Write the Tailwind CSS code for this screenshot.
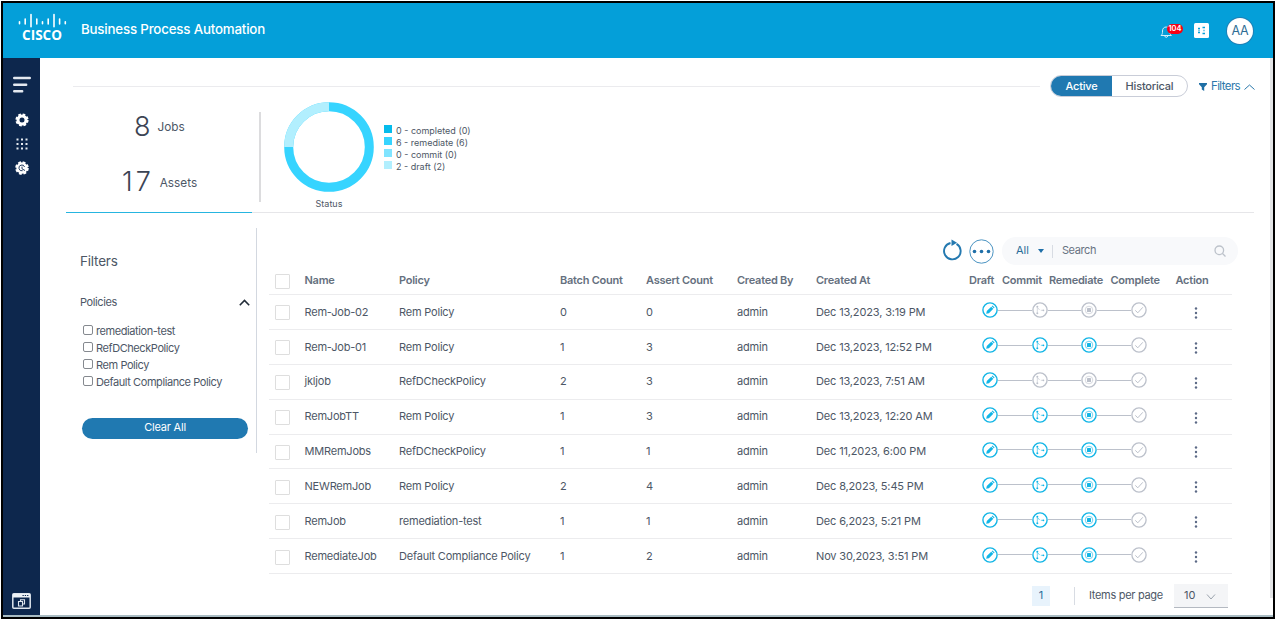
<!DOCTYPE html>
<html lang="en">
<head>
<meta charset="utf-8">
<title>Business Process Automation</title>
<script src="https://cdn.jsdelivr.net/npm/@tailwindcss/browser@4"></script>
</head>
<body class="bg-white overflow-hidden font-['Inter',sans-serif] text-[#4d5766] text-[11px] tracking-[-0.2px]">
<svg class="hidden">
  <symbol id="s-draft" viewBox="0 0 16 16"><circle cx="8" cy="8" r="7.100" fill="#fff" stroke="currentColor" stroke-width="1.400"/><path d="M4.200 11.800l.6-2.700 4.400-4.400 2.100 2.100-4.400 4.400z M9.700 4.200l.8-.8 2.100 2.100-.8.8z" fill="currentColor"/></symbol>
  <symbol id="s-commit" viewBox="0 0 16 16"><circle cx="8" cy="8" r="7.100" fill="#fff" stroke="currentColor" stroke-width="1.400"/><path d="M5.300 5.500v5M5.800 5.800l1.800 2.200M8.800 8.300h2.500" fill="none" stroke="currentColor" stroke-width=".6"/><circle cx="5.300" cy="4.700" r="1" fill="currentColor"/><circle cx="5.300" cy="11.200" r="1" fill="currentColor"/><circle cx="11.400" cy="8.300" r=".9" fill="currentColor"/></symbol>
  <symbol id="s-rem" viewBox="0 0 16 16"><circle cx="8" cy="8" r="7.100" fill="#fff" stroke="currentColor" stroke-width="1.400"/><circle cx="8" cy="8" r="3.800" fill="none" stroke="currentColor" stroke-width=".6"/><rect x="6" y="6" width="4" height="4" rx=".6" fill="currentColor"/></symbol>
  <symbol id="s-done" viewBox="0 0 16 16"><circle cx="8" cy="8" r="7.100" fill="#fff" stroke="currentColor" stroke-width="1.300"/><path d="M4.300 8.400l2.500 2.400 5-5.500" fill="none" stroke="currentColor" stroke-width="1"/></symbol>
</svg>
<div class="ml-px mt-px w-[1274px] h-[618px] border-2 border-black flex flex-col">
  <header class="h-[55px] shrink-0 bg-[#049fd9] flex items-center text-white">
    <svg class="w-[50px] h-[36px] ml-[15px] mt-[1px] overflow-visible" viewBox="0 0 50 36">
      <g stroke="#fff" stroke-width="1.600" stroke-linecap="round"><path d="M1.500 8.800v2M7.200 6v5M13 1.500v12.300M18.800 6v5M24.500 8.800v2M30.200 6v5M36 1.500v12.300M41.600 6v5M47.300 8.800v2"/></g>
      <text x="4" y="27.200" textLength="40" lengthAdjust="spacing" fill="#fff" class="font-['Open_Sans',sans-serif] font-bold text-[13.500px] tracking-normal">CISCO</text>
    </svg>
    <div class="ml-[13px] text-[13.300px] font-medium leading-[20px] -mt-[3px] w-[190px] whitespace-nowrap tracking-[-0.180px]">Business Process Automation</div>
    <div class="ml-auto flex items-center mr-[20px]">
      <div class="relative w-[24px] h-[18px] mr-[10px]">
        <svg class="w-[13px] h-[15px] mt-[2px]" viewBox="0 0 13 15" fill="none" stroke="#d5effa" stroke-width="1"><path d="M1 11.500c1.500-1.200 1.500-2.500 1.500-4.500 0-2.500 1.500-4 3.700-4s3.700 1.500 3.700 4c0 2 0 3.300 1.500 4.500zM4.800 12c.3 1.800 2.600 1.800 2.900 0"/></svg>
        <span class="absolute left-[7px] top-[2px] w-[16px] h-[10px] rounded-full bg-[#fa0012] text-[7.500px] font-semibold leading-[9px] text-center tracking-normal">104</span>
      </div>
      <svg class="w-[15px] h-[15px] mr-[18px]" viewBox="0 0 15 15"><rect width="15" height="15" rx="1.500" fill="#fff"/><path d="M4 5.500h2M8.500 4.500h2.500M4 9.500h2M8.500 10.500H11M4.500 7.500h1M9.500 7.500h1" stroke="#049fd9" stroke-width="1.300"/></svg>
      <div class="w-[26px] h-[26px] rounded-full bg-white text-[#2e6d94] text-[12.500px] leading-[25px] text-center ring-1 ring-[#1f80b6]">AA</div>
    </div>
  </header>
  <div class="flex h-[557px]">
    <nav class="w-[37px] bg-[#0d274d] flex flex-col items-center shrink-0">
      <svg class="w-[18px] h-[17px] mt-[18px]" viewBox="0 0 18 17" stroke="#e4e9f0" stroke-width="2.400" stroke-linecap="round"><path d="M1.200 2h15.600M1.200 8.700h12M1.200 15.200h8"/></svg>
      <svg class="w-[14px] h-[14px] mt-[20px]" viewBox="0 0 14 14"><circle cx="7" cy="7" r="4" fill="none" stroke="#fff" stroke-width="3"/><circle cx="7" cy="7" r="5.600" fill="none" stroke="#fff" stroke-width="2" stroke-dasharray="2.600 1.798"/></svg>
      <svg class="w-[12px] h-[12px] mt-[11px]" viewBox="0 0 12 12" fill="#e4e9f0"><path d="M.5.5h2v2h-2zM5 .5h2v2H5zM9.500.5h2v2h-2zM.5 5h2v2h-2zM5 5h2v2H5zM9.500 5h2v2h-2zM.5 9.500h2v2h-2zM5 9.500h2v2H5zM9.500 9.500h2v2h-2z"/></svg>
      <svg class="w-[14px] h-[14px] mt-[11px]" viewBox="0 0 14 14"><circle cx="7" cy="7" r="5.700" fill="#fff"/><circle cx="7" cy="7" r="5.800" fill="none" stroke="#fff" stroke-width="2" stroke-dasharray="2.800 1.755"/><path d="M9.600 6a2.900 2.900 0 1 0-2 3.700M7 5.600v2.200l3 1.700" fill="none" stroke="#0d274d" stroke-width=".9"/></svg>
      <svg class="w-[19px] h-[16px] mt-auto mb-[6px]" viewBox="0 0 19 16"><rect x=".8" y=".8" width="17.400" height="14.400" rx="1" fill="none" stroke="#dfe6ee" stroke-width="1.500"/><path d="M1 1h17v3.500H1z" fill="#eef2f6"/><path d="M10.500 2.500h6" stroke="#0d274d" stroke-width="1" stroke-dasharray="1.300 1"/><path d="M6.500 8.500h4v4.500h-4zM8.500 8.500V6.800h4V11h-2" fill="none" stroke="#dfe6ee" stroke-width="1.100"/></svg>
    </nav>
    <main class="w-[1230px] shrink-0 flex flex-col">
      <div class="flex items-center mt-[17px] h-[22px] ml-[33px]">
        <div class="w-[967px] h-px bg-[#ebebee]"></div>
        <div class="ml-[10px] w-[138px] h-[22px] rounded-full border border-[#c9cdd8] flex overflow-hidden leading-[20px] text-center font-medium shrink-0">
          <div class="w-[61px] bg-[#2079b1] text-white">Active</div><div class="grow">Historical</div>
        </div>
        <div class="ml-[11px] flex items-center text-[#2b78ab] text-[11.500px] tracking-[-0.600px]">
          <svg class="w-[8px] h-[8px] mr-[4px] mt-[2px]" viewBox="0 0 8 8" fill="#1f6fa5"><path d="M0 0h8v1.200L5.200 4.300V8L2.800 6.500V4.300L0 1.200z"/></svg>
          <span class="mt-[1px]">Filters</span>
          <svg class="w-[11px] h-[6px] ml-[4px] mt-[2px]" viewBox="0 0 11 6" fill="none" stroke="#2b78ab"><path d="M.5 5.500l5-4.500 5 4.500"/></svg>
        </div>
      </div>
      <div class="flex h-[115px] pt-px">
        <div class="w-[219px] pl-[94px] pt-[13px] tracking-normal">
          <div class="flex items-center h-[32px]"><span class="text-[27px] font-light text-[#3c4454]">8</span><span class="ml-[7px] mt-[2px] text-[11.800px]">Jobs</span></div>
          <div class="flex items-center h-[32px] mt-[23px] -ml-[12px]"><span class="text-[27px] font-light text-[#3c4454] tracking-[3px]">17</span><span class="ml-[6px] mt-[3px] text-[11.800px]">Assets</span></div>
        </div>
        <div class="w-[2px] h-[90px] mt-[14px] bg-[#dcdcde]"></div>
        <div class="ml-[23px] w-[90px] mt-[4px] flex flex-col items-center tracking-normal">
          <svg class="w-[90px] h-[90px]" viewBox="0 0 90 90" fill="none" stroke-width="9"><circle cx="45" cy="45" r="40.300" stroke="#36d4ff"/><path d="M4.700 45A40.300 40.300 0 0 1 45 4.700" stroke="#b2effe"/></svg>
          <div class="text-[9px] leading-[12px] mt-[6px]">Status</div>
        </div>
        <div class="ml-[10px] mt-[27px] text-[9px] leading-[12px] tracking-normal">
          <div class="flex h-[12px]"><i class="w-[8px] h-[8px] bg-[#05bcec] mr-[4px]"></i><span>0 - completed (0)</span></div>
          <div class="flex h-[12px]"><i class="w-[8px] h-[8px] bg-[#36d4ff] mr-[4px]"></i><span>6 - remediate (6)</span></div>
          <div class="flex h-[12px]"><i class="w-[8px] h-[8px] bg-[#80e4ff] mr-[4px]"></i><span>0 - commit (0)</span></div>
          <div class="flex h-[12px]"><i class="w-[8px] h-[8px] bg-[#b2effe] mr-[4px]"></i><span>2 - draft (2)</span></div>
        </div>
      </div>
      <div class="flex h-px ml-[26px]"><div class="w-[186px] bg-[#26b5e0]"></div><div class="w-[1002px] bg-[#e6e6e9]"></div></div>
      <div class="flex">
        <aside class="w-[217px] h-[225px] mt-[15px] pl-[40px] border-r border-[#d3d8e0]">
          <div class="text-[13.500px] leading-[18px] mt-[24px]">Filters</div>
          <div class="flex justify-between items-center mt-[24px] h-[16px] pr-[6px] tracking-[-0.400px]"><span>Policies</span>
            <svg class="w-[11px] h-[7px]" viewBox="0 0 11 7" fill="none" stroke="#222c38" stroke-width="1.600"><path d="M.8 6.200l4.700-4.700 4.700 4.700"/></svg></div>
          <div class="mt-[13px] ml-[3px] tracking-[-0.420px]" id="policies"></div>
          <div class="mt-[27px] ml-[2px] w-[166px] h-[21px] rounded-full bg-[#2079b1] text-white text-center leading-[18px]">Clear All</div>
        </aside>
        <section class="ml-[12px] w-[963px]">
          <div class="flex items-center h-[28px] mt-[24px]">
            <svg class="w-[20px] h-[22px] ml-[674px] -mt-[2px] shrink-0" viewBox="0 0 20 22" fill="none"><path d="M13.500 4.900A8.300 8.300 0 1 1 7.500 4" stroke="#2479b0" stroke-width="1.900"/><path d="M8.500.5L14 3.800 8.500 7z" fill="#2479b0"/></svg>
            <svg class="w-[25px] h-[25px] ml-[6px] shrink-0" viewBox="0 0 25 25"><circle cx="12.500" cy="12.500" r="11.700" fill="#fff" stroke="#4c94c2"/><g fill="#1f6fa8"><circle cx="5.500" cy="12.500" r="1.800"/><circle cx="12.500" cy="12.500" r="1.800"/><circle cx="19.500" cy="12.500" r="1.800"/></g></svg>
            <div class="ml-[8px] w-[236px] shrink-0 h-[28px] rounded-full bg-[#f8f9fb] flex items-center pl-[14px] pr-[12px]">
              <span class="text-[#2b6d99] -mt-[2px] tracking-normal">All</span>
              <svg class="w-[6px] h-[4px] ml-[9px] -mt-[1px]" viewBox="0 0 6 4" fill="#1f6fa8"><path d="M0 0h6L3 4z"/></svg>
              <span class="w-px h-[13px] bg-[#d8dce3] ml-[8px]"></span>
              <span class="ml-[9px] text-[#687382] -mt-[2px] tracking-[-0.400px]">Search</span>
              <svg class="w-[12px] h-[12px] ml-auto -mt-[1px]" viewBox="0 0 12 12" fill="none" stroke="#bcc2ca" stroke-width="1.300"><circle cx="5.300" cy="5.300" r="4.300"/><path d="M8.500 8.500l3 3"/></svg>
            </div>
          </div>
          <div class="grid grid-cols-[35.500px_94.500px_161px_86px_91px_79px_153px_33px_47px_61.500px_65px_56.500px] h-[30px] pt-[2px] items-center border-b border-[#ececee] font-semibold text-[#65707e] whitespace-nowrap tracking-[-0.250px]">
            <span class="w-[15px] h-[15px] border border-[#dedede] rounded-[1px] ml-[5.500px] mt-[2px]"></span>
            <span>Name</span><span>Policy</span><span>Batch Count</span><span>Assert Count</span><span>Created By</span><span>Created At</span><span>Draft</span><span>Commit</span><span>Remediate</span><span>Complete</span><span>Action</span>
          </div>
          <div id="rows"></div>
          <div class="flex items-center h-[24px] mt-[10px]">
            <div class="ml-[763px] w-[18px] h-[20px] bg-[#e8f3fc] text-[#2b6d99] leading-[19px] text-center">1</div>
            <div class="ml-[24px] w-px h-[18px] bg-[#d8dce3]"></div>
            <div class="ml-[14px] w-[85px] -mt-[2px] tracking-[-0.300px]">Items per page</div>
            <div class="w-[54px] h-[24px] bg-[#f4f5f7] border-b border-[#b4b9c1] flex items-center pl-[10px]"><span class="-mt-[1px] tracking-normal">10</span>
              <svg class="w-[10px] h-[6px] ml-[11px] mt-[3px]" viewBox="0 0 9 6" fill="none" stroke="#9aa2ac"><path d="M.5.5l4 4.500 4-4.500"/></svg></div>
          </div>
        </section>
      </div>
    </main>
    <div class="w-[3px] h-[540px] bg-[#e3e4e6]"></div>
  </div>
  <div class="h-[2px] bg-[#a9bcc3]"></div>
</div>
<script>
document.getElementById('policies').innerHTML = ['remediation-test','RefDCheckPolicy','Rem Policy','Default Compliance Policy'].map(p =>
  `<div class="flex items-center h-[17px] whitespace-nowrap"><i class="w-[10px] h-[10px] border border-[#85898f] rounded-[2px] mr-[3px] -mt-[3px]"></i><span>${p}</span></div>`).join('');
const data = [
 ['Rem-Job-02','Rem Policy',0,0,'Dec 13,2023, 3:19 PM',0],
 ['Rem-Job-01','Rem Policy',1,3,'Dec 13,2023, 12:52 PM',1],
 ['jkljob','RefDCheckPolicy',2,3,'Dec 13,2023, 7:51 AM',0],
 ['RemJobTT','Rem Policy',1,3,'Dec 13,2023, 12:20 AM',1],
 ['MMRemJobs','RefDCheckPolicy',1,1,'Dec 11,2023, 6:00 PM',1],
 ['NEWRemJob','Rem Policy',2,4,'Dec 8,2023, 5:45 PM',1],
 ['RemJob','remediation-test',1,1,'Dec 6,2023, 5:21 PM',1],
 ['RemediateJob','Default Compliance Policy',1,2,'Nov 30,2023, 3:51 PM',1]];
const line = '<i class="w-[33.600px] h-px bg-[#bcc1cb]"></i>';
document.getElementById('rows').innerHTML = data.map(([n,p,b,a,d,on]) => {
  const c = on ? 'text-[#12b5e6]' : 'text-[#bcc1cb]';
  return `<div class="grid grid-cols-[35.500px_94.500px_161px_86px_91px_79px_153px_206px_57px] h-[34.875px] items-center border-b border-[#ececee] whitespace-nowrap">
  <span class="w-[15px] h-[15px] border border-[#dedede] rounded-[1px] ml-[5.500px] mt-[2px]"></span>
  <span>${n}</span><span>${p}</span><span>${b}</span><span>${a}</span><span>admin</span><span class="tracking-[-0.150px]">${d}</span>
  <span class="flex items-center pl-[13px] -mt-[3px]"><svg class="w-[16px] h-[16px] text-[#12b5e6]"><use href="#s-draft"/></svg>${line}<svg class="w-[16px] h-[16px] ${c}"><use href="#s-commit"/></svg>${line}<svg class="w-[16px] h-[16px] ${c}"><use href="#s-rem"/></svg>${line}<svg class="w-[16px] h-[16px] text-[#bcc1cb]"><use href="#s-done"/></svg></span>
  <svg class="w-[4px] h-[12px] ml-[18.500px] mt-[2px]" viewBox="0 0 4 12" fill="#5c6a86"><circle cx="2" cy="1.500" r="1.200"/><circle cx="2" cy="6" r="1.200"/><circle cx="2" cy="10.500" r="1.200"/></svg></div>`;
}).join('');
</script>
</body>
</html>
